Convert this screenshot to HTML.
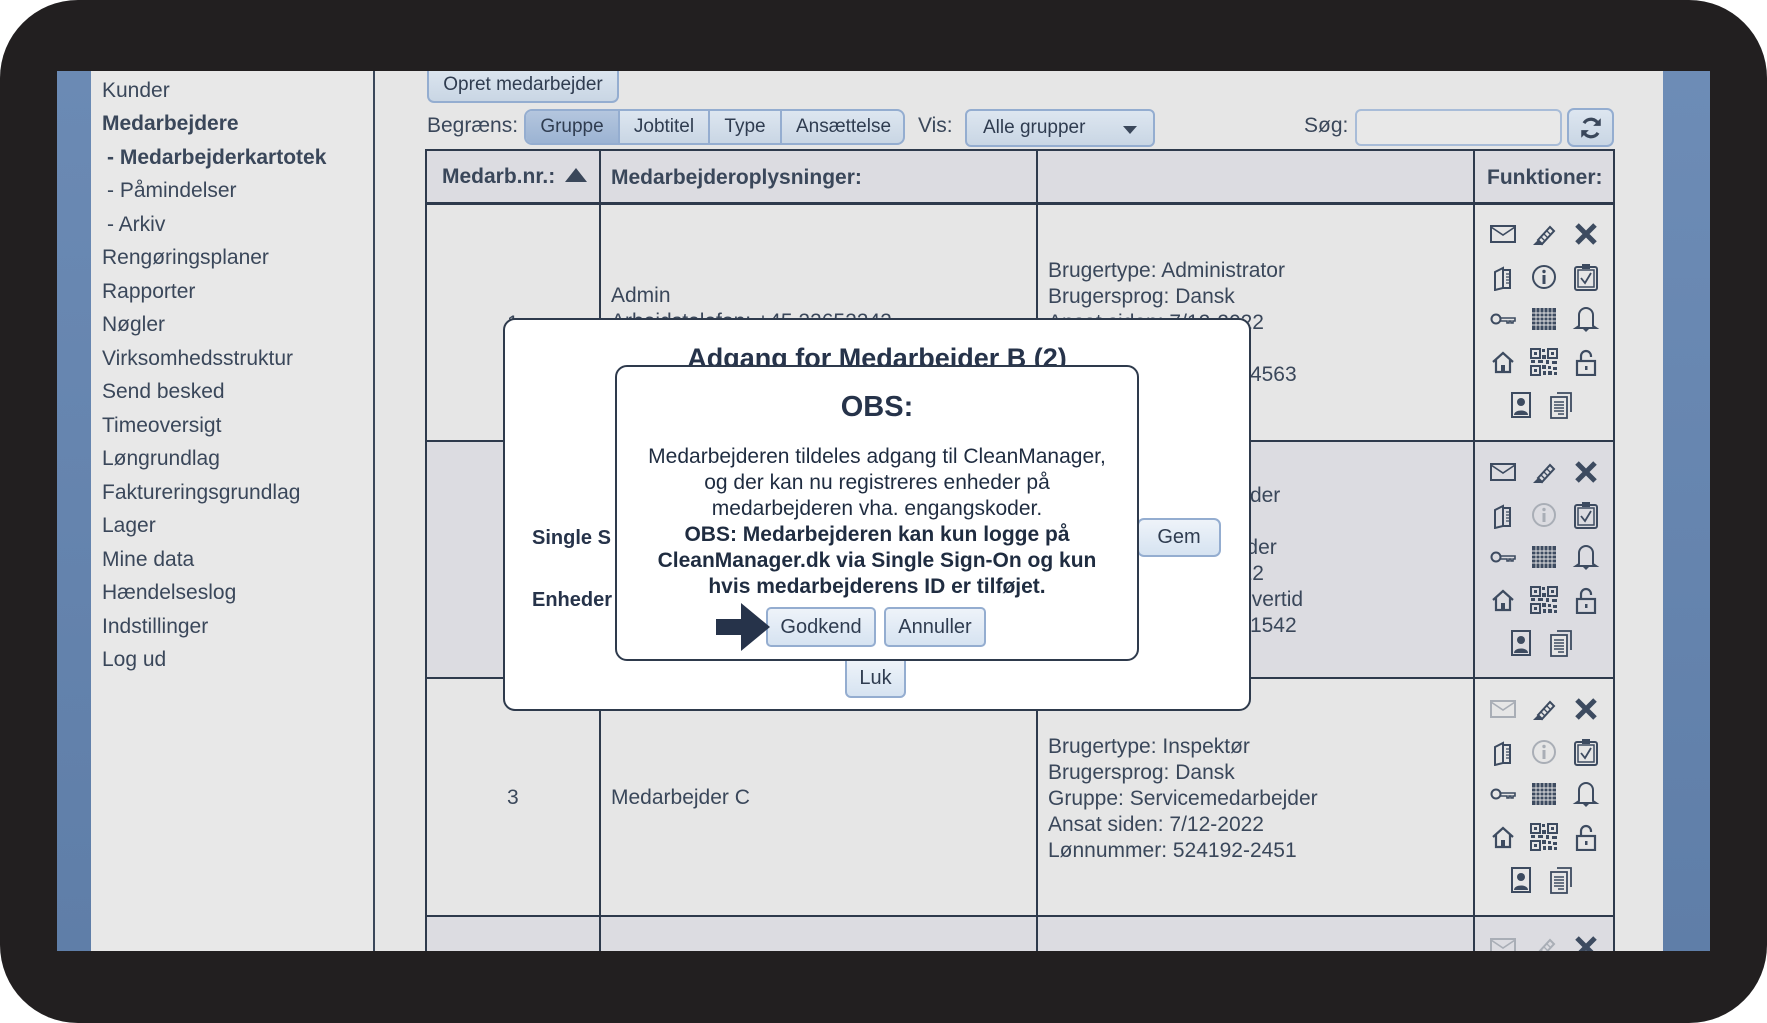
<!DOCTYPE html>
<html><head><meta charset="utf-8">
<style>
*{margin:0;padding:0;box-sizing:border-box}
html,body{width:1767px;height:1023px;overflow:hidden;background:#fff}
body{font-family:"Liberation Sans",sans-serif;color:#3a475a;position:relative}
.frame{position:absolute;left:0;top:0;width:1767px;height:1023px;background:#221f20;border-radius:78px}
.content{position:absolute;left:57px;top:71px;width:1653px;height:880px;background:#e6e6e6;overflow:hidden}
.a{position:absolute;white-space:nowrap}
.blueL{position:absolute;left:0;top:0;width:34px;height:880px;background:linear-gradient(#6b8ab4,#5f7ea8)}
.blueR{position:absolute;left:1606px;top:0;width:47px;height:880px;background:linear-gradient(#6d8cb6,#5f7ea8)}
.side{position:absolute;left:34px;top:0;width:284px;height:880px;background:#e8e8e8;border-right:2px solid #3a475a}
.side div{position:absolute;left:11px;font-size:21px;white-space:nowrap}
.btn{position:absolute;background:linear-gradient(#dde6f0,#c9d6e4);border:2px solid #94add0;border-radius:6px;font-size:19px;text-align:center;color:#2f3c50}
.t{font-size:21px}
.line{position:absolute;background:#2e3a4c}
</style></head><body>
<div class="frame"></div>
<div class="content">
 <div class="blueL"></div>
 <div class="side">
  <div style="top:8px">Kunder</div>
  <div style="top:41px;font-weight:bold">Medarbejdere</div>
  <div style="top:75px;left:16px;font-weight:bold">- Medarbejderkartotek</div>
  <div style="top:108px;left:16px">- Påmindelser</div>
  <div style="top:142px;left:16px">- Arkiv</div>
  <div style="top:175px">Rengøringsplaner</div>
  <div style="top:209px">Rapporter</div>
  <div style="top:242px">Nøgler</div>
  <div style="top:276px">Virksomhedsstruktur</div>
  <div style="top:309px">Send besked</div>
  <div style="top:343px">Timeoversigt</div>
  <div style="top:376px">Løngrundlag</div>
  <div style="top:410px">Faktureringsgrundlag</div>
  <div style="top:443px">Lager</div>
  <div style="top:477px">Mine data</div>
  <div style="top:510px">Hændelseslog</div>
  <div style="top:544px">Indstillinger</div>
  <div style="top:577px">Log ud</div>
 </div>
 <div class="blueR"></div>

 <div class="btn" style="left:370px;top:-4px;width:192px;height:36px;line-height:36px;border-top:none;border-radius:0 0 7px 7px">Opret medarbejder</div>
 <div class="a t" style="left:370px;top:43px">Begræns:</div>
 <div class="btn" style="left:467px;top:38px;width:381px;height:36px;overflow:hidden;border-radius:8px">
   <div class="a" style="left:0;top:0;width:92px;height:34px;line-height:32px;background:linear-gradient(#b4c6de,#9ab2d2)">Gruppe</div>
   <div class="a" style="left:92px;top:0;width:90px;height:34px;line-height:32px;border-left:2px solid #94add0">Jobtitel</div>
   <div class="a" style="left:182px;top:0;width:72px;height:34px;line-height:32px;border-left:2px solid #94add0">Type</div>
   <div class="a" style="left:254px;top:0;width:125px;height:34px;line-height:32px;border-left:2px solid #94add0">Ansættelse</div>
 </div>
 <div class="a t" style="left:861px;top:43px">Vis:</div>
 <div class="btn" style="left:908px;top:38px;width:190px;height:38px;line-height:34px;text-align:left;padding-left:16px;border-radius:6px">Alle grupper<span class="a" style="right:16px;top:15px;width:0;height:0;border-left:7px solid transparent;border-right:7px solid transparent;border-top:8px solid #3a475a"></span></div>
 <div class="a t" style="left:1247px;top:43px">Søg:</div>
 <div class="a" style="left:1298px;top:38px;width:207px;height:37px;background:#e8e8e8;border:2px solid #a8bcd8;border-radius:6px"></div>
 <div class="btn" style="left:1510px;top:37px;width:47px;height:39px;border-radius:7px">
  <svg width="26" height="26" viewBox="0 0 24 24" style="margin-top:5px"><path d="M19 9a7.5 7.5 0 0 0-13.5-1.5" fill="none" stroke="#3a475a" stroke-width="3"/><path d="M21 3v7h-7z" fill="#3a475a"/><path d="M5 15a7.5 7.5 0 0 0 13.5 1.5" fill="none" stroke="#3a475a" stroke-width="3"/><path d="M3 21v-7h7z" fill="#3a475a"/></svg>
 </div>

 <div class="a" style="left:368px;top:78px;width:1190px;height:810px;border:2px solid #2e3a4c;border-bottom:none"></div>
 <div class="a" style="left:370px;top:80px;width:1186px;height:52px;background:#dcdce1"></div>
 <div class="a" style="left:370px;top:370px;width:1186px;height:237px;background:#dcdce1"></div>
 <div class="a" style="left:370px;top:845px;width:1186px;height:40px;background:#dcdce1"></div>
 <div class="line" style="left:368px;top:131px;width:1190px;height:3px"></div>
 <div class="line" style="left:368px;top:369px;width:1190px;height:2px"></div>
 <div class="line" style="left:368px;top:606px;width:1190px;height:2px"></div>
 <div class="line" style="left:368px;top:844px;width:1190px;height:2px"></div>
 <div class="line" style="left:542px;top:78px;width:2px;height:810px"></div>
 <div class="line" style="left:979px;top:78px;width:2px;height:810px"></div>
 <div class="line" style="left:1416px;top:78px;width:2px;height:810px"></div>
 <div class="a t" style="left:385px;top:94px;font-weight:bold">Medarb.nr.: <span style="display:inline-block;width:0;height:0;border-left:11px solid transparent;border-right:11px solid transparent;border-bottom:14px solid #3a475a;vertical-align:1px;margin-left:4px"></span></div>
 <div class="a t" style="left:554px;top:95px;font-weight:bold">Medarbejderoplysninger:</div>
 <div class="a t" style="left:1430px;top:95px;font-weight:bold">Funktioner:</div>

 <div class="a t" style="left:450px;top:241px">1</div>
 <div class="a t" style="left:554px;top:213px">Admin</div>
 <div class="a t" style="left:554px;top:239px">Arbejdstelefon: +45 22652242</div>
 <div class="a t" style="left:991px;top:187px;line-height:26px">Brugertype: Administrator<br>Brugersprog: Dansk<br>Ansat siden: 7/12-2022<br>Gruppe: Admin<br>Lønnummer: 524192-4563</div>
 <div class="a t" style="left:991px;top:412px;line-height:26px">Brugertype: Medarbejder<br>Brugersprog: Dansk<br>Gruppe: Servicearbejder<br>Ansat siden: 7/12-2022<br>Arbejdstid: Fuldtid + overtid<br>Lønnummer: 524192-1542</div>
 <div class="a t" style="left:450px;top:715px">3</div>
 <div class="a t" style="left:554px;top:715px">Medarbejder C</div>
 <div class="a t" style="left:991px;top:663px;line-height:26px">Brugertype: Inspektør<br>Brugersprog: Dansk<br>Gruppe: Servicemedarbejder<br>Ansat siden: 7/12-2022<br>Lønnummer: 524192-2451</div>

 <svg class="a" style="left:0;top:0" width="1653" height="880">
  <defs>
   <symbol id="env" viewBox="0 0 28 28"><rect x="2" y="6" width="24" height="16" fill="none" stroke="currentColor" stroke-width="2"/><path d="M2 7l12 8 12-8" fill="none" stroke="currentColor" stroke-width="1.6"/></symbol>
   <symbol id="pen" viewBox="0 0 28 28"><path d="M8 20l12-13 4 4-12 13z" fill="none" stroke="currentColor" stroke-width="2"/><path d="M11 17l4 4M14 14l4 4M17 11l4 4" stroke="currentColor" stroke-width="1.3"/><path d="M3 25h10l-5-5z" fill="currentColor"/></symbol>
   <symbol id="x" viewBox="0 0 28 28"><path d="M5 5l18 18M23 5L5 23" stroke="currentColor" stroke-width="5"/></symbol>
   <symbol id="book" viewBox="0 0 28 28"><path d="M6 9l8-4v20l-8 2z" fill="none" stroke="currentColor" stroke-width="2"/><path d="M14 7h7v18h-7" fill="none" stroke="currentColor" stroke-width="2"/><path d="M17 11h3M17 14h3M17 17h3M17 20h3" stroke="currentColor" stroke-width="1.2"/></symbol>
   <symbol id="info" viewBox="0 0 28 28"><circle cx="14" cy="14" r="11" fill="none" stroke="currentColor" stroke-width="2"/><circle cx="14" cy="8.5" r="1.7" fill="currentColor"/><path d="M14 12v9" stroke="currentColor" stroke-width="3"/></symbol>
   <symbol id="clip" viewBox="0 0 28 28"><rect x="3" y="4" width="22" height="23" rx="2" fill="none" stroke="currentColor" stroke-width="2"/><rect x="6" y="7" width="16" height="17" fill="none" stroke="currentColor" stroke-width="1.5"/><rect x="10" y="1" width="8" height="5" fill="currentColor"/><path d="M9 15l4 5 6-10" fill="none" stroke="currentColor" stroke-width="1.8"/></symbol>
   <symbol id="key" viewBox="0 0 28 28"><circle cx="7" cy="14" r="4.5" fill="none" stroke="currentColor" stroke-width="2"/><path d="M11 13h15v3h-2v2h-2v-2h-2v2h-2v-2h-7" fill="none" stroke="currentColor" stroke-width="1.6"/></symbol>
   <symbol id="cal" viewBox="0 0 28 28"><rect x="2" y="3" width="24" height="22" fill="currentColor"/><path d="M2 8h24M2 12h24M2 16h24M2 20h24M6 3v22M10 3v22M14 3v22M18 3v22M22 3v22" stroke="#e6e6e6" stroke-width="0.9"/></symbol>
   <symbol id="bell" viewBox="0 0 28 28"><path d="M7 21V10a7 7 0 0 1 14 0v11l3 2H4z" fill="none" stroke="currentColor" stroke-width="2"/><path d="M11 24h6l-3 3z" fill="currentColor"/></symbol>
   <symbol id="house" viewBox="0 0 28 28"><path d="M4 14L14 5l10 9M7 12v12h14V12" fill="none" stroke="currentColor" stroke-width="2.2"/><rect x="12" y="17" width="4" height="7" fill="currentColor"/></symbol>
   <symbol id="qr" viewBox="0 0 28 28"><path d="M1 1h9v9H1zM18 1h9v9h-9zM1 18h9v9H1z" fill="none" stroke="currentColor" stroke-width="2"/><path d="M4 4h3v3H4zM21 4h3v3h-3zM4 21h3v3H4zM12 1h3v3h-3zM12 7h4v4h-4zM1 12h4v3H1zM8 12h5v3H8zM16 12h3v4h-3zM22 13h5v3h-5zM12 17h4v4h-4zM18 18h3v3h-3zM23 19h4v3h-4zM13 23h3v4h-3zM18 23h4v4h-4zM24 24h3v3h-3z" fill="currentColor"/></symbol>
   <symbol id="lock" viewBox="0 0 28 28"><rect x="5" y="13" width="18" height="14" fill="none" stroke="currentColor" stroke-width="2.2"/><path d="M9 13V8a5 5 0 0 1 10 0v1" fill="none" stroke="currentColor" stroke-width="2.2"/><rect x="13" y="18" width="2.5" height="4" fill="currentColor"/></symbol>
   <symbol id="user" viewBox="0 0 28 28"><rect x="5" y="2" width="18" height="24" fill="none" stroke="currentColor" stroke-width="2"/><circle cx="14" cy="11" r="4" fill="currentColor"/><path d="M7 24c0-6 14-6 14 0z" fill="currentColor"/></symbol>
   <symbol id="docs" viewBox="0 0 28 28"><path d="M10 2h14v19" fill="none" stroke="currentColor" stroke-width="1.8"/><rect x="4" y="6" width="16" height="21" fill="#e6e6e6" stroke="currentColor" stroke-width="1.8"/><path d="M7 11h10M7 14h10M7 17h10M7 20h10M11 23h6" stroke="currentColor" stroke-width="1.4"/></symbol>
  </defs>
  <g color="#3d4b60">
   <use href="#env" x="1432" y="149" width="28" height="28"/><use href="#pen" x="1473" y="149" width="28" height="28"/><use href="#x" x="1515" y="149" width="28" height="28"/>
   <use href="#book" x="1432" y="192" width="28" height="28"/><use href="#info" x="1473" y="192" width="28" height="28"/><use href="#clip" x="1515" y="192" width="28" height="28"/>
   <use href="#key" x="1432" y="234" width="28" height="28"/><use href="#cal" x="1473" y="234" width="28" height="28"/><use href="#bell" x="1515" y="234" width="28" height="28"/>
   <use href="#house" x="1432" y="277" width="28" height="28"/><use href="#qr" x="1473" y="277" width="28" height="28"/><use href="#lock" x="1515" y="277" width="28" height="28"/>
   <use href="#user" x="1450" y="320" width="28" height="28"/><use href="#docs" x="1490" y="320" width="28" height="28"/>
  </g>
  <g color="#3d4b60" transform="translate(0,238)">
   <use href="#env" x="1432" y="149" width="28" height="28"/><use href="#pen" x="1473" y="149" width="28" height="28"/><use href="#x" x="1515" y="149" width="28" height="28"/>
   <use href="#book" x="1432" y="192" width="28" height="28"/><use href="#info" x="1473" y="192" width="28" height="28" color="#a9aeb6"/><use href="#clip" x="1515" y="192" width="28" height="28"/>
   <use href="#key" x="1432" y="234" width="28" height="28"/><use href="#cal" x="1473" y="234" width="28" height="28"/><use href="#bell" x="1515" y="234" width="28" height="28"/>
   <use href="#house" x="1432" y="277" width="28" height="28"/><use href="#qr" x="1473" y="277" width="28" height="28"/><use href="#lock" x="1515" y="277" width="28" height="28"/>
   <use href="#user" x="1450" y="320" width="28" height="28"/><use href="#docs" x="1490" y="320" width="28" height="28"/>
  </g>
  <g color="#3d4b60" transform="translate(0,475)">
   <use href="#env" x="1432" y="149" width="28" height="28" color="#a9aeb6"/><use href="#pen" x="1473" y="149" width="28" height="28"/><use href="#x" x="1515" y="149" width="28" height="28"/>
   <use href="#book" x="1432" y="192" width="28" height="28"/><use href="#info" x="1473" y="192" width="28" height="28" color="#a9aeb6"/><use href="#clip" x="1515" y="192" width="28" height="28"/>
   <use href="#key" x="1432" y="234" width="28" height="28"/><use href="#cal" x="1473" y="234" width="28" height="28"/><use href="#bell" x="1515" y="234" width="28" height="28"/>
   <use href="#house" x="1432" y="277" width="28" height="28"/><use href="#qr" x="1473" y="277" width="28" height="28"/><use href="#lock" x="1515" y="277" width="28" height="28"/>
   <use href="#user" x="1450" y="320" width="28" height="28"/><use href="#docs" x="1490" y="320" width="28" height="28"/>
  </g>
  <g color="#3d4b60" transform="translate(0,713)">
   <use href="#env" x="1432" y="149" width="28" height="28" color="#a9aeb6"/><use href="#pen" x="1473" y="149" width="28" height="28" color="#a9aeb6"/><use href="#x" x="1515" y="149" width="28" height="28"/>
  </g>
 </svg>

 <div class="a" style="left:446px;top:247px;width:748px;height:393px;background:#fff;border:2px solid #2e3a4c;border-radius:12px"></div>
 <div class="a" style="left:446px;top:272px;width:748px;text-align:center;font-size:27px;font-weight:bold;color:#26334a">Adgang for Medarbejder B (2)</div>
 <div class="a" style="left:475px;top:456px;font-size:20px;font-weight:bold;color:#26334a">Single S</div>
 <div class="a" style="left:475px;top:518px;font-size:20px;font-weight:bold;color:#26334a">Enheder</div>
 <div class="btn" style="left:1080px;top:447px;width:84px;height:39px;line-height:35px;font-size:20px;border-radius:7px;background:linear-gradient(#eef3f9,#d6e3f1)">Gem</div>
 <div class="btn" style="left:788px;top:588px;width:61px;height:39px;line-height:35px;font-size:20px;border-radius:0 0 6px 6px;background:linear-gradient(#eef3f9,#d6e3f1)">Luk</div>

 <div class="a" style="left:558px;top:294px;width:524px;height:296px;background:#fff;border:2px solid #2e3a4c;border-radius:12px"></div>
 <div class="a" style="left:558px;top:320px;width:524px;text-align:center;font-size:29px;font-weight:bold;color:#26334a">OBS:</div>
 <div class="a" style="left:558px;top:373px;width:524px;text-align:center;font-size:21px;line-height:26px;color:#1f2c40">Medarbejderen tildeles adgang til CleanManager,<br>og der kan nu registreres enheder på<br>medarbejderen vha. engangskoder.<br><b>OBS: Medarbejderen kan kun logge på<br>CleanManager.dk via Single Sign-On og kun<br>hvis medarbejderens ID er tilføjet.</b></div>
 <div class="btn" style="left:709px;top:536px;width:110px;height:40px;line-height:36px;font-size:20px;border-radius:5px;background:linear-gradient(#eef3f9,#d6e3f1)">Godkend</div>
 <div class="btn" style="left:827px;top:536px;width:102px;height:40px;line-height:36px;font-size:20px;border-radius:5px;background:linear-gradient(#eef3f9,#d6e3f1)">Annuller</div>
 <svg class="a" style="left:658px;top:531px" width="56" height="50" viewBox="0 0 56 50"><path d="M1 17h25V1l29 24-29 24V33H1z" fill="#26334a"/></svg>
</div>
</body></html>
